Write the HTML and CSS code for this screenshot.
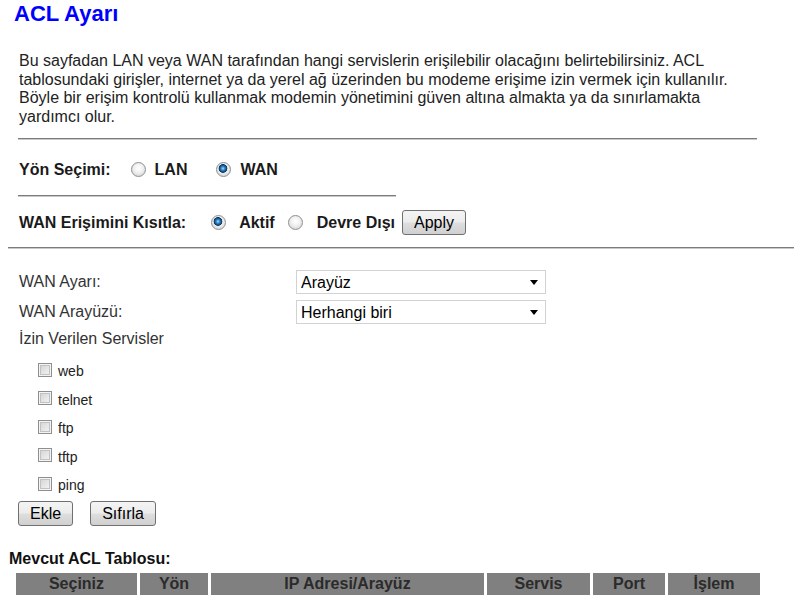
FILE: index.html
```html
<!DOCTYPE html>
<html lang="tr">
<head>
<meta charset="utf-8">
<title>ACL Ayarı</title>
<link rel="stylesheet" href="styles.css">
</head>
<body>
<h1 class="title">ACL Ayarı</h1>
<div class="section">
  <p class="intro">Bu sayfadan LAN veya WAN tarafından hangi servislerin erişilebilir olacağını belirtebilirsiniz. ACL tablosundaki girişler, internet ya da yerel ağ üzerinden bu modeme erişime izin vermek için kullanılır. Böyle bir erişim kontrolü kullanmak modemin yönetimini güven altına almakta ya da sınırlamakta yardımcı olur.</p>
  <div class="rule rule-long"></div>
  <div class="opt-row opt-row-first">
    <span class="opt-label">Yön Seçimi:</span>
    <input type="radio" name="dir" class="radio r-lan">
    <span class="opt-text">LAN</span>
    <input type="radio" name="dir" class="radio r-wan" checked>
    <span class="opt-text">WAN</span>
  </div>
  <div class="rule rule-short"></div>
  <div class="opt-row">
    <span class="opt-label">WAN Erişimini Kısıtla:</span>
    <input type="radio" name="en" class="radio r-aktif" checked>
    <span class="opt-text">Aktif</span>
    <input type="radio" name="en" class="radio r-devre">
    <span class="opt-text">Devre Dışı</span>
    <button class="btn btn-apply" type="button">Apply</button>
  </div>
</div>
<div class="rule rule-full"></div>
<div class="form">
  <div class="form-row">
    <span class="form-label">WAN Ayarı:</span>
    <span class="select-wrap"><select class="select"><option>Arayüz</option></select></span>
  </div>
  <div class="form-row">
    <span class="form-label">WAN Arayüzü:</span>
    <span class="select-wrap"><select class="select"><option>Herhangi biri</option></select></span>
  </div>
  <div class="form-row form-row-text">İzin Verilen Servisler</div>
  <div class="services">
    <label class="svc"><input type="checkbox" class="check"><span>web</span></label>
    <label class="svc"><input type="checkbox" class="check"><span>telnet</span></label>
    <label class="svc"><input type="checkbox" class="check"><span>ftp</span></label>
    <label class="svc"><input type="checkbox" class="check"><span>tftp</span></label>
    <label class="svc"><input type="checkbox" class="check"><span>ping</span></label>
  </div>
  <div class="actions">
    <button class="btn" type="button">Ekle</button>
    <button class="btn" type="button">Sıfırla</button>
  </div>
</div>
<div class="table-title">Mevcut ACL Tablosu:</div>
<table class="acl">
  <tr>
    <th class="c1">Seçiniz</th>
    <th class="c2">Yön</th>
    <th class="c3">IP Adresi/Arayüz</th>
    <th class="c4">Servis</th>
    <th class="c5">Port</th>
    <th class="c6">İşlem</th>
  </tr>
</table>
</body>
</html>
```
FILE: styles.css
```css
html, body {
  background: #fff;
}
body {
  margin: 0 8px;
  font-family: "Liberation Sans", Arial, sans-serif;
  color: #222;
  font-size: 16px;
  overflow: hidden;
}
.title {
  margin: 1px 0 0 6px;
  font-size: 22px;
  line-height: 26px;
  font-weight: bold;
  color: #0000ff;
}
.section {
  margin-left: 10px;
  width: 740px;
}
.intro {
  margin: 25px 0 0 1px;
  font-size: 16px;
  line-height: 18.5px;
  color: #222;
}
.rule {
  height: 0;
  border-top: 1px solid #7c7c7c;
  border-bottom: 1px solid #c9c9c9;
}
.rule-long {
  margin-top: 12px;
  width: 739px;
}
.rule-short {
  width: 378px;
}
.rule-full {
  width: 800px;
}
.opt-row {
  display: flex;
  align-items: center;
  height: 25px;
  margin: 13px 0 12px 1px;
  font-weight: bold;
  color: #1a1a1a;
}
.opt-row-first {
  margin-top: 17px;
  margin-bottom: 13px;
}
.opt-label {
  white-space: nowrap;
}
.radio {
  appearance: none;
  -webkit-appearance: none;
  width: 15px;
  height: 15px;
  min-width: 15px;
  margin: 0;
  border: 1px solid #8e8f8f;
  border-radius: 50%;
  background: radial-gradient(circle at 50% 40%, #ffffff 0, #f2f2f2 40%, #cdcdcd 100%);
  box-sizing: border-box;
  flex: none;
}
.radio:checked {
  background:
    radial-gradient(circle at 46% 42%, #b5e2ff 0, #3a8fd6 1.6px, #15548b 3.2px, #0b3358 4px, rgba(255,255,255,0) 4.7px),
    radial-gradient(circle at 50% 40%, #ffffff 0, #f2f2f2 40%, #cdcdcd 100%);
}
.opt-text {
  margin-left: 9px;
}
.r-lan { margin-left: 20px; }
.r-wan { margin-left: 29px; }
.r-aktif { margin-left: 25px; }
.r-aktif + .opt-text { margin-left: 13px; }
.r-devre { margin-left: 13px; }
.r-devre + .opt-text { margin-left: 14px; }
.btn {
  height: 25px;
  padding: 0 11px;
  border: 1px solid #707070;
  border-radius: 3px;
  background: linear-gradient(#f4f4f4 0%, #ececec 48%, #dedede 52%, #d0d0d0 100%);
  font-family: "Liberation Sans", Arial, sans-serif;
  font-size: 16px;
  color: #000;
  line-height: 21px;
  box-sizing: border-box;
}
.btn-apply {
  margin-left: 7px;
  font-weight: normal;
}
.form {
  margin: 21px 0 0 11px;
  color: #333;
}
.form-row {
  display: flex;
  align-items: center;
  height: 24px;
  margin-bottom: 6px;
}
.form-label {
  width: 277px;
}
.form-row-text {
  height: 18px;
  margin-bottom: 0;
}
.select-wrap {
  position: relative;
  display: inline-block;
}
.select-wrap::after {
  content: "";
  position: absolute;
  right: 8px;
  top: 10px;
  border-left: 4px solid transparent;
  border-right: 4px solid transparent;
  border-top: 5px solid #000;
  pointer-events: none;
}
.select {
  appearance: none;
  -webkit-appearance: none;
  width: 250px;
  height: 24px;
  margin: 0;
  padding: 0 4px;
  border: 1px solid #d2d2d2;
  border-radius: 0;
  background: #fff;
  font-family: "Liberation Sans", Arial, sans-serif;
  font-size: 16px;
  color: #000;
  box-sizing: border-box;
}
.services {
  margin-top: 9px;
  margin-left: 19px;
}
.svc {
  display: flex;
  align-items: center;
  height: 28.5px;
  font-size: 14px;
  color: #222;
}
.check {
  appearance: none;
  -webkit-appearance: none;
  width: 14px;
  height: 14px;
  margin: 0 6px 3px 0;
  border: 1px solid #8f8f8f;
  background: linear-gradient(135deg, #cfcfcf 0%, #e6e6e6 55%, #f6f6f6 100%);
  box-shadow: inset 0 0 0 1px #f4f4f4, inset 0 0 0 2px #c0c3c6;
  box-sizing: border-box;
  flex: none;
}
.actions {
  display: flex;
  gap: 17px;
  margin: 1px 0 0 -1px;
}
.table-title {
  margin: 24px 0 0 1px;
  font-weight: bold;
  line-height: 18px;
  color: #111;
}
.acl {
  margin: 5px 0 0 5px;
  border-spacing: 3px 0;
  border-collapse: separate;
}
.acl th {
  height: 22px;
  padding: 0;
  background: #808080;
  color: #2b2b2b;
  font-size: 16px;
  font-weight: bold;
  text-align: center;
}
.c1 { width: 121px; }
.c2 { width: 68px; }
.c3 { width: 273px; }
.c4 { width: 103px; }
.c5 { width: 72px; }
.c6 { width: 92px; }
```
